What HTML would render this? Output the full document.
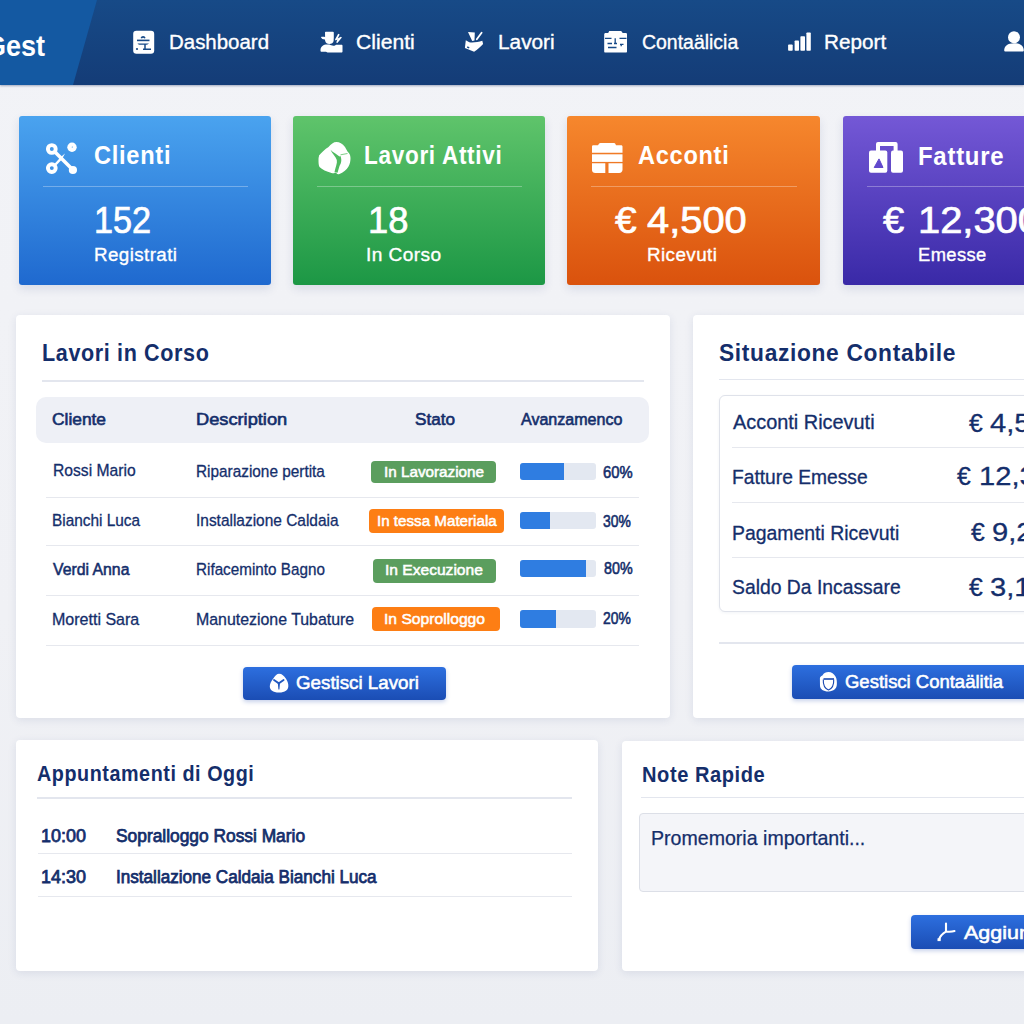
<!DOCTYPE html>
<html><head><meta charset="utf-8"><title>Gest Dashboard</title>
<style>
html,body{margin:0;padding:0;}
body{width:1024px;height:1024px;position:relative;overflow:hidden;background:linear-gradient(180deg,#f2f3f7 0%,#f0f1f5 60%,#eceef3 100%);font-family:"Liberation Sans",sans-serif;}
.b{position:absolute;}
.t{position:absolute;line-height:1;white-space:nowrap;transform-origin:0 0;}
</style></head><body>
<div class="b" style="left:0px;top:0px;width:1024px;height:85px;background:linear-gradient(180deg,#174a87 0%,#143c77 100%);box-shadow:0 1px 2px rgba(10,30,80,.35);"></div>
<svg class="b" style="left:0px;top:0px" width="120" height="85" viewBox="0 0 120 85"><polygon points="0,0 97,0 73,85 0,85" fill="#1459a2"/></svg>
<div class="t" id="gest" style="left:-15.00px;top:30.60px;font-size:30px;color:#fff;font-weight:700;transform:scaleX(0.9000);">Gest</div>
<div class="t" id="nav1" style="left:169.30px;top:31.62px;font-size:20px;color:#fff;font-weight:400;transform:scaleX(1.0224);-webkit-text-stroke:0.35px #fff;">Dashboard</div>
<div class="t" id="nav2" style="left:356.28px;top:31.62px;font-size:20px;color:#fff;font-weight:400;transform:scaleX(1.0571);-webkit-text-stroke:0.35px #fff;">Clienti</div>
<div class="t" id="nav3" style="left:497.66px;top:31.62px;font-size:20px;color:#fff;font-weight:400;transform:scaleX(1.0399);-webkit-text-stroke:0.35px #fff;">Lavori</div>
<div class="t" id="nav4" style="left:641.75px;top:31.62px;font-size:20px;color:#fff;font-weight:400;transform:scaleX(0.9724);-webkit-text-stroke:0.35px #fff;">Contaälicia</div>
<div class="t" id="nav5" style="left:824.41px;top:31.82px;font-size:20px;color:#fff;font-weight:400;transform:scaleX(1.0354);-webkit-text-stroke:0.35px #fff;">Report</div>
<svg class="b" style="left:128px;top:26px" width="32" height="32" viewBox="0 0 32 32"><rect x="5.2" y="4.7" width="21" height="23" rx="3.2" fill="#fff"/><path d="M13.3 12.2a1.9 1.9 0 0 1 3.6 0" stroke="#174a88" stroke-width="1.6" fill="none"/><path d="M9 14.4h12.5" stroke="#174a88" stroke-width="1.6"/><path d="M9.5 17.6h11.5c-1 1-2 1.2-3.5 1.2h-5c-1.5 0-2.5-0.2-3-1.2z" fill="#174a88"/><path d="M17 18v5M15 23.2h8" stroke="#174a88" stroke-width="1.5"/><circle cx="9" cy="23" r="1.1" fill="#174a88"/></svg>
<svg class="b" style="left:316px;top:26px" width="32" height="32" viewBox="0 0 32 32"><path d="M9 6.5c0-0.6 0.4-0.8 1-0.8h6.8c0.6 0 1 0.3 1 0.8v5l-0.2 3.5c-0.3 1.8-2 3-4.2 3s-3.8-1.3-4.2-3l-0.3-1.5c-2 0-3.5-0.8-4-2.5 1.5-0.5 3-0.3 4.2 0z" fill="#fff"/><path d="M4.5 24c0-3.5 3-5.5 6.5-5.5h2.5c1.5 1 3.5 1.5 5.5 1l1-0.8h5.5c0.6 0 1 0.4 1 1v5.8c0 0.6-0.4 1-1 1h-14l-1.5-0.8h-4.5c-0.6 0-1-0.5-1-1z" fill="#fff"/><path d="M22.2 7.8l1.5 0.6-2 4 3.2-1.6 1 0.8-4.5 5.5-1.2-0.5 1.2-3-1.8 0.8-0.6-1z" fill="#fff"/></svg>
<svg class="b" style="left:458px;top:26px" width="32" height="32" viewBox="0 0 32 32"><path d="M10 6l6.8 0.6-0.3 7.9-2.3 0.4z" fill="#fff"/><path d="M18.8 13.2l4.8-6.5" stroke="#fff" stroke-width="1.8" stroke-linecap="round"/><path d="M7.8 14.2l3.5 2c4 0.6 9 -0.3 13 -1.5l0.8 3.2c-2.5 2.8-5.5 5.5-9 7.8l-9.2-3.8z" fill="#fff"/><path d="M9.2 21l2 0.9" stroke="#174a88" stroke-width="1.4"/></svg>
<svg class="b" style="left:598px;top:24px" width="36" height="36" viewBox="0 0 36 36"><path d="M6.2 10.5c0-1 0.5-1.5 1.5-1.5h2.5l1-2h12l1.5 2h3c1 0 1.3 0.5 1.3 1.5v17c0 0.6-0.4 1-1 1h-20.8c-0.6 0-1-0.4-1-1z" fill="#fff"/><path d="M7 14.3h6.5M21.5 14.3h7M17.2 14.3v5.5M9.5 19.5h4.5M16 19.5h3M10 23.5h8.5M22 20.3h3.5M23.2 20.5v1.8" stroke="#174a88" stroke-width="1.3"/></svg>
<svg class="b" style="left:780px;top:24px" width="36" height="36" viewBox="0 0 36 36"><rect x="8.1" y="20.4" width="4.6" height="6.3" rx="0.8" fill="#fff"/><rect x="14.6" y="16.5" width="4.4" height="10.2" rx="0.8" fill="#fff"/><rect x="20.4" y="12.3" width="4.6" height="14.4" rx="0.8" fill="#fff"/><rect x="26.4" y="8.4" width="4.4" height="18.3" rx="0.8" fill="#fff"/></svg>
<svg class="b" style="left:994px;top:24px" width="30" height="36" viewBox="0 0 30 36"><circle cx="20" cy="13.2" r="6" fill="#fff"/><path d="M10.2 26.5c0-4.5 3.5-7.3 9.8-7.3s9.8 2.8 9.8 7.3c0 0.6-0.4 0.9-1 0.9h-17.6c-0.6 0-1-0.3-1-0.9z" fill="#fff"/></svg>
<div class="b" style="left:18.5px;top:115.5px;width:252.5px;height:169.0px;background:linear-gradient(180deg,#4aa3ef 0%,#1f69cf 100%);border-radius:3px;box-shadow:0 4px 10px rgba(40,60,120,.12);"></div>
<div class="b" style="left:42.5px;top:185.7px;width:205.0px;height:1.2px;background:rgba(255,255,255,.30);"></div>
<div class="t" id="ct0" style="left:94.36px;top:142.39px;font-size:26px;color:#fff;font-weight:700;transform:scaleX(0.9075);letter-spacing:0.8px;">Clienti</div>
<div class="t" id="cv0" style="left:93.51px;top:202.85px;font-size:36.5px;color:#fff;font-weight:400;transform:scaleX(0.9386);-webkit-text-stroke:0.7px #fff;">152</div>
<div class="t" id="cs0" style="left:93.74px;top:246.06px;font-size:18.3px;color:#fff;font-weight:400;transform:scaleX(1.0265);letter-spacing:0.4px;-webkit-text-stroke:0.35px #fff;">Registrati</div>
<div class="b" style="left:293px;top:115.5px;width:252px;height:169.0px;background:linear-gradient(180deg,#5fc46b 0%,#1c9745 100%);border-radius:3px;box-shadow:0 4px 10px rgba(40,60,120,.12);"></div>
<div class="b" style="left:317px;top:185.7px;width:204.5px;height:1.2px;background:rgba(255,255,255,.30);"></div>
<div class="t" id="ct1" style="left:364.19px;top:142.39px;font-size:26px;color:#fff;font-weight:700;transform:scaleX(0.8671);letter-spacing:0.8px;">Lavori Attivi</div>
<div class="t" id="cv1" style="left:367.71px;top:202.85px;font-size:36.5px;color:#fff;font-weight:400;transform:scaleX(0.9951);-webkit-text-stroke:0.7px #fff;">18</div>
<div class="t" id="cs1" style="left:365.91px;top:246.06px;font-size:18.3px;color:#fff;font-weight:400;transform:scaleX(1.0431);letter-spacing:0.4px;-webkit-text-stroke:0.35px #fff;">In Corso</div>
<div class="b" style="left:567px;top:115.5px;width:253px;height:169.0px;background:linear-gradient(180deg,#f6872d 0%,#da520d 100%);border-radius:3px;box-shadow:0 4px 10px rgba(40,60,120,.12);"></div>
<div class="b" style="left:591px;top:185.7px;width:205.5px;height:1.2px;background:rgba(255,255,255,.30);"></div>
<div class="t" id="ct2" style="left:638.03px;top:142.39px;font-size:26px;color:#fff;font-weight:700;transform:scaleX(0.9058);letter-spacing:0.8px;">Acconti</div>
<div class="t" id="cv2e" style="left:614.83px;top:202.85px;font-size:36.5px;color:#fff;font-weight:400;transform:scaleX(1.0647);-webkit-text-stroke:0.7px #fff;">€</div>
<div class="t" id="cv2n" style="left:647.33px;top:202.85px;font-size:36.5px;color:#fff;font-weight:400;transform:scaleX(1.0917);-webkit-text-stroke:0.7px #fff;">4,500</div>
<div class="t" id="cs2" style="left:646.94px;top:246.06px;font-size:18.3px;color:#fff;font-weight:400;transform:scaleX(1.0306);letter-spacing:0.4px;-webkit-text-stroke:0.35px #fff;">Ricevuti</div>
<div class="b" style="left:842.5px;top:115.5px;width:252.5px;height:169.0px;background:linear-gradient(180deg,#7458d6 0%,#3929a7 100%);border-radius:3px;box-shadow:0 4px 10px rgba(40,60,120,.12);"></div>
<div class="b" style="left:866.5px;top:185.7px;width:205.0px;height:1.2px;background:rgba(255,255,255,.30);"></div>
<div class="t" id="ct3" style="left:917.85px;top:142.99px;font-size:26px;color:#fff;font-weight:700;transform:scaleX(0.9214);letter-spacing:0.8px;">Fatture</div>
<div class="t" id="cv3e" style="left:882.76px;top:202.85px;font-size:36.5px;color:#fff;font-weight:400;transform:scaleX(1.0444);-webkit-text-stroke:0.7px #fff;">€</div>
<div class="t" id="cv3n" style="left:917.81px;top:202.85px;font-size:36.5px;color:#fff;font-weight:400;transform:scaleX(1.0917);-webkit-text-stroke:0.7px #fff;">12,300</div>
<div class="t" id="cs3" style="left:918.26px;top:246.06px;font-size:18.3px;color:#fff;font-weight:400;transform:scaleX(1.0038);letter-spacing:0.4px;-webkit-text-stroke:0.35px #fff;">Emesse</div>
<svg class="b" style="left:40px;top:138px" width="44" height="40" viewBox="0 0 44 40"><g fill="none" stroke="#fff" stroke-width="3.9"><circle cx="11.8" cy="11" r="3.9"/><circle cx="11.8" cy="30.1" r="3.9"/></g><circle cx="32" cy="9.2" r="4.7" fill="#fff"/><circle cx="32.3" cy="9" r="0.6" fill="#3f93e6"/><circle cx="32.9" cy="32" r="4.1" fill="#fff"/><path d="M15.5 14.5l16 16" stroke="#fff" stroke-width="3.6" stroke-linecap="round"/><path d="M15 27l5.5-5.8" stroke="#fff" stroke-width="2.4"/><path d="M19 20.5l6-5-3.5 6.5z" fill="#fff"/></svg>
<svg class="b" style="left:310px;top:135px" width="50" height="45" viewBox="0 0 50 45"><path d="M9 20.5c2.5-3 6-6.5 9.5-8.5 2.5-3 5-5 8-5s6 1.5 8.5 5l2.5 4.5c1.5 1.5 3 3 3 6.5 0 3-0.5 6-2 8.5-2 3.5-5.5 6-9 7.5-2 0.5-3 0-3-1l-1.5-0.5c-1 1-2 1-3.5 0.5-5-1.5-9.5-3.5-12-6-1-1.5-1-4.5-1-7.5 0-1.5 0.3-2.5 0.5-3.5z" fill="#fff"/><path d="M20.5 14.8C23 17.5 27 19.5 29.5 21.5L30.5 21C31.5 24 32 27 29.5 31L27.5 37.8L24.5 37C25.5 32 27.5 28 26.8 25C25.8 21.5 22 18.5 20.5 14.8Z" fill="#50bb60"/><path d="M30.5 19.8l7-1.3" stroke="#7fcf88" stroke-width="1"/></svg>
<svg class="b" style="left:585px;top:135px" width="50" height="45" viewBox="0 0 50 45"><path d="M7 11.5c0-1 0.6-1.3 1.5-1.3h4.5l1-1.5c0.3-0.5 0.8-0.7 1.5-0.7h13.5c0.7 0 1 0.2 1.3 0.7l0.7 1.5h5c1 0 1.5 0.5 1.5 1.5v6h-30.5z" fill="#fff"/><rect x="7" y="19.3" width="30.5" height="7.6" fill="#fff"/><path d="M7 28.3h13.3v9.7h-10c-2 0-3.3-1-3.3-3z" fill="#fff"/><path d="M23.5 28.3h14v6.5c0 2-1.3 3.2-3.3 3.2h-10.7z" fill="#fff"/></svg>
<svg class="b" style="left:860px;top:135px" width="50" height="45" viewBox="0 0 50 45"><path d="M18 16.5v-7.4h17.6v7.4" stroke="#fff" stroke-width="4" fill="none" stroke-linejoin="round"/><rect x="9" y="15.6" width="18.3" height="22.2" rx="2" fill="#fff"/><rect x="31" y="15.6" width="12" height="22.2" rx="2" fill="#fff"/><path d="M19 23.9l4 8.6h-8.8z" fill="#6148cc" stroke="#6148cc" stroke-width="1" stroke-linejoin="round"/></svg>
<div class="b" style="left:16px;top:315px;width:654px;height:403px;background:#fff;border-radius:4px;box-shadow:0 2px 8px rgba(40,60,120,.10);"></div>
<div class="b" style="left:693px;top:315px;width:407px;height:403px;background:#fff;border-radius:4px;box-shadow:0 2px 8px rgba(40,60,120,.10);"></div>
<div class="b" style="left:16.3px;top:740.3px;width:581.7px;height:230.4px;background:#fff;border-radius:4px;box-shadow:0 2px 8px rgba(40,60,120,.10);"></div>
<div class="b" style="left:622.3px;top:740.5px;width:477.7px;height:230.5px;background:#fff;border-radius:4px;box-shadow:0 2px 8px rgba(40,60,120,.10);"></div>
<div class="t" id="p1t" style="left:42.36px;top:340.83px;font-size:24.3px;color:#142e6b;font-weight:700;transform:scaleX(0.8872);letter-spacing:0.7px;">Lavori in Corso</div>
<div class="b" style="left:41.5px;top:380px;width:602.0px;height:1.5px;background:#e3e6ee;"></div>
<div class="b" style="left:36px;top:397px;width:613px;height:46px;background:#eef0f6;border-radius:10px;"></div>
<div class="t" id="h1" style="left:51.84px;top:410.95px;font-size:16.3px;color:#142e6b;font-weight:400;transform:scaleX(1.0660);-webkit-text-stroke:0.6px #142e6b;">Cliente</div>
<div class="t" id="h2" style="left:196.22px;top:410.95px;font-size:16.3px;color:#142e6b;font-weight:400;transform:scaleX(1.1198);-webkit-text-stroke:0.6px #142e6b;">Description</div>
<div class="t" id="h3" style="left:414.64px;top:410.95px;font-size:16.3px;color:#142e6b;font-weight:400;transform:scaleX(1.0534);-webkit-text-stroke:0.6px #142e6b;">Stato</div>
<div class="t" id="h4" style="left:521.00px;top:410.96px;font-size:16.3px;color:#142e6b;font-weight:400;transform:scaleX(0.9858);-webkit-text-stroke:0.6px #142e6b;">Avanzamenco</div>
<div class="t" id="r0a" style="left:52.50px;top:462.41px;font-size:16.3px;color:#142e6b;font-weight:400;transform:scaleX(0.9619);-webkit-text-stroke:0.3px #142e6b;">Rossi Mario</div>
<div class="t" id="r0b" style="left:196.28px;top:462.50px;font-size:16.3px;color:#142e6b;font-weight:400;transform:scaleX(0.9432);-webkit-text-stroke:0.3px #142e6b;">Riparazione pertita</div>
<div class="b" style="left:370.9px;top:460.9px;width:125.0px;height:22.5px;background:#5b9e5e;border-radius:4px;"></div>
<div class="t" id="r0c" style="left:384.13px;top:463.58px;font-size:15.5px;color:#fff;font-weight:400;transform:scaleX(0.9836);-webkit-text-stroke:0.55px #fff;">In Lavorazione</div>
<div class="b" style="left:520px;top:463.1px;width:76px;height:16.9px;background:#e3e8f1;border-radius:3px;"></div>
<div class="b" style="left:520px;top:463.1px;width:44px;height:16.9px;background:#2f7de1;border-radius:3px 0 0 3px;"></div>
<div class="t" id="r0d" style="left:602.51px;top:465.08px;font-size:16.7px;color:#142e6b;font-weight:400;transform:scaleX(0.8860);-webkit-text-stroke:0.6px #142e6b;">60%</div>
<div class="t" id="r1a" style="left:52.49px;top:512.30px;font-size:16.3px;color:#142e6b;font-weight:400;transform:scaleX(0.9449);-webkit-text-stroke:0.3px #142e6b;">Bianchi Luca</div>
<div class="t" id="r1b" style="left:196.21px;top:512.30px;font-size:16.3px;color:#142e6b;font-weight:400;transform:scaleX(0.9490);-webkit-text-stroke:0.3px #142e6b;">Installazione Caldaia</div>
<div class="b" style="left:368.75px;top:509.3px;width:135.25px;height:24.1px;background:#fd7e14;border-radius:4px;"></div>
<div class="t" id="r1c" style="left:377.29px;top:513.38px;font-size:15.5px;color:#fff;font-weight:400;transform:scaleX(0.9786);-webkit-text-stroke:0.55px #fff;">In tessa Materiala</div>
<div class="b" style="left:520px;top:511.5px;width:76px;height:17.3px;background:#e3e8f1;border-radius:3px;"></div>
<div class="b" style="left:520px;top:511.5px;width:30px;height:17.3px;background:#2f7de1;border-radius:3px 0 0 3px;"></div>
<div class="t" id="r1d" style="left:603.32px;top:514.26px;font-size:16.7px;color:#142e6b;font-weight:400;transform:scaleX(0.8321);-webkit-text-stroke:0.6px #142e6b;">30%</div>
<div class="t" id="r2a" style="left:53.48px;top:560.95px;font-size:16.3px;color:#142e6b;font-weight:400;transform:scaleX(0.9706);-webkit-text-stroke:0.55px #142e6b;">Verdi Anna</div>
<div class="t" id="r2b" style="left:196.30px;top:561.10px;font-size:16.3px;color:#142e6b;font-weight:400;transform:scaleX(0.9368);-webkit-text-stroke:0.3px #142e6b;">Rifaceminto Bagno</div>
<div class="b" style="left:373px;top:558.8px;width:123.2px;height:23.8px;background:#5b9e5e;border-radius:4px;"></div>
<div class="t" id="r2c" style="left:385.48px;top:562.43px;font-size:15.5px;color:#fff;font-weight:400;transform:scaleX(1.0049);-webkit-text-stroke:0.55px #fff;">In Execuzione</div>
<div class="b" style="left:520px;top:560.2px;width:76px;height:17.0px;background:#e3e8f1;border-radius:3px;"></div>
<div class="b" style="left:520px;top:560.2px;width:65.6px;height:17.0px;background:#2f7de1;border-radius:3px 0 0 3px;"></div>
<div class="t" id="r2d" style="left:604.17px;top:561.05px;font-size:16.7px;color:#142e6b;font-weight:400;transform:scaleX(0.8568);-webkit-text-stroke:0.6px #142e6b;">80%</div>
<div class="t" id="r3a" style="left:52.43px;top:611.00px;font-size:16.3px;color:#142e6b;font-weight:400;transform:scaleX(0.9840);-webkit-text-stroke:0.3px #142e6b;">Moretti Sara</div>
<div class="t" id="r3b" style="left:196.25px;top:611.00px;font-size:16.3px;color:#142e6b;font-weight:400;transform:scaleX(0.9761);-webkit-text-stroke:0.3px #142e6b;">Manutezione Tubature</div>
<div class="b" style="left:371.5px;top:607.2px;width:128.0px;height:24.1px;background:#fd7e14;border-radius:4px;"></div>
<div class="t" id="r3c" style="left:383.54px;top:610.83px;font-size:15.5px;color:#fff;font-weight:400;transform:scaleX(1.0109);-webkit-text-stroke:0.55px #fff;">In Soprolloggo</div>
<div class="b" style="left:520px;top:610px;width:76px;height:17.7px;background:#e3e8f1;border-radius:3px;"></div>
<div class="b" style="left:520px;top:610px;width:36px;height:17.7px;background:#2f7de1;border-radius:3px 0 0 3px;"></div>
<div class="t" id="r3d" style="left:603.32px;top:610.86px;font-size:16.7px;color:#142e6b;font-weight:400;transform:scaleX(0.8321);-webkit-text-stroke:0.6px #142e6b;">20%</div>
<div class="b" style="left:45.8px;top:496.8px;width:593.2px;height:1.2px;background:#e6e8ee;"></div>
<div class="b" style="left:45.8px;top:544.8px;width:593.2px;height:1.2px;background:#e6e8ee;"></div>
<div class="b" style="left:45.8px;top:595.1px;width:593.2px;height:1.2px;background:#e6e8ee;"></div>
<div class="b" style="left:45.8px;top:645.1px;width:593.2px;height:1.2px;background:#e6e8ee;"></div>
<div class="b" style="left:243.2px;top:666.8px;width:202.8px;height:33.3px;background:linear-gradient(180deg,#2d6fdf,#1b4db4);border-radius:4px;box-shadow:0 2px 4px rgba(30,70,170,.25);"></div>
<svg class="b" style="left:264px;top:670px" width="30" height="28" viewBox="0 0 30 28"><path d="M15 3.8c3 0 5 2 7 5s2.5 5.5 2.3 8c-0.3 3-3 5.8-9.3 5.8s-9-2.8-9.2-5.8c-0.2-3 1.5-5.5 3.5-8.3s3.7-4.7 5.7-4.7z" fill="#fff"/><path d="M10 10l4.8 3.3 4.8-3.3" stroke="#2058c0" stroke-width="1.8" fill="none" stroke-linecap="round"/><path d="M13.8 13h2.2l-0.6 6.5h-1z" fill="#2058c0"/></svg>
<div class="t" id="b1" style="left:296.19px;top:675.19px;font-size:17.9px;color:#fff;font-weight:400;transform:scaleX(1.0477);-webkit-text-stroke:0.55px #fff;">Gestisci Lavori</div>
<div class="t" id="p2t" style="left:718.61px;top:340.85px;font-size:23.8px;color:#142e6b;font-weight:700;transform:scaleX(0.9559);letter-spacing:0.7px;">Situazione Contabile</div>
<div class="b" style="left:718.6px;top:378.8px;width:381.4px;height:1.4px;background:#e3e6ee;"></div>
<div class="b" style="left:718.6px;top:394.7px;width:381.4px;height:217.8px;border:1px solid #dfe2ea;border-radius:6px;box-sizing:border-box;background:#fff;box-shadow:0 1px 3px rgba(40,60,120,.06);"></div>
<div class="t" id="s0a" style="left:732.67px;top:412.87px;font-size:19.7px;color:#142e6b;font-weight:400;transform:scaleX(1.0108);-webkit-text-stroke:0.3px #142e6b;">Acconti Ricevuti</div>
<div class="t" id="s0e" style="left:969.08px;top:409.71px;font-size:26.5px;color:#142e6b;font-weight:400;transform:scaleX(0.9339);-webkit-text-stroke:0.3px #142e6b;">€</div>
<div class="t" id="s0n" style="left:990.30px;top:409.71px;font-size:26.5px;color:#142e6b;font-weight:400;transform:scaleX(1.1000);-webkit-text-stroke:0.3px #142e6b;">4,500</div>
<div class="t" id="s1a" style="left:731.79px;top:468.27px;font-size:19.7px;color:#142e6b;font-weight:400;transform:scaleX(0.9756);-webkit-text-stroke:0.3px #142e6b;">Fatture Emesse</div>
<div class="t" id="s1e" style="left:957.03px;top:463.31px;font-size:26.5px;color:#142e6b;font-weight:400;transform:scaleX(0.9339);-webkit-text-stroke:0.3px #142e6b;">€</div>
<div class="t" id="s1n" style="left:978.80px;top:463.31px;font-size:26.5px;color:#142e6b;font-weight:400;transform:scaleX(1.1000);-webkit-text-stroke:0.3px #142e6b;">12,300</div>
<div class="t" id="s2a" style="left:731.75px;top:523.67px;font-size:19.7px;color:#142e6b;font-weight:400;transform:scaleX(0.9861);-webkit-text-stroke:0.3px #142e6b;">Pagamenti Ricevuti</div>
<div class="t" id="s2e" style="left:971.08px;top:518.71px;font-size:26.5px;color:#142e6b;font-weight:400;transform:scaleX(0.9339);-webkit-text-stroke:0.3px #142e6b;">€</div>
<div class="t" id="s2n" style="left:991.92px;top:518.71px;font-size:26.5px;color:#142e6b;font-weight:400;transform:scaleX(1.1000);-webkit-text-stroke:0.3px #142e6b;">9,200</div>
<div class="t" id="s3a" style="left:731.68px;top:578.27px;font-size:19.7px;color:#142e6b;font-weight:400;transform:scaleX(0.9818);-webkit-text-stroke:0.3px #142e6b;">Saldo Da Incassare</div>
<div class="t" id="s3e" style="left:969.08px;top:573.51px;font-size:26.5px;color:#142e6b;font-weight:400;transform:scaleX(0.9339);-webkit-text-stroke:0.3px #142e6b;">€</div>
<div class="t" id="s3n" style="left:989.90px;top:573.51px;font-size:26.5px;color:#142e6b;font-weight:400;transform:scaleX(1.1000);-webkit-text-stroke:0.3px #142e6b;">3,100</div>
<div class="b" style="left:732px;top:446.9px;width:368px;height:1.2px;background:#e6e8ee;"></div>
<div class="b" style="left:732px;top:501.9px;width:368px;height:1.2px;background:#e6e8ee;"></div>
<div class="b" style="left:732px;top:557.2px;width:368px;height:1.2px;background:#e6e8ee;"></div>
<div class="b" style="left:718.6px;top:642.3px;width:381.4px;height:1.3px;background:#e3e6ee;"></div>
<div class="b" style="left:791.5px;top:665.3px;width:308.5px;height:33.7px;background:linear-gradient(180deg,#2d6fdf,#1b4db4);border-radius:4px;box-shadow:0 2px 4px rgba(30,70,170,.25);"></div>
<svg class="b" style="left:814px;top:668px" width="30" height="28" viewBox="0 0 30 28"><path d="M14.5 4.1c3 0 5.5 2 7 4.5s1.5 6 1.3 8.5c-0.3 3.5-3 6.3-8.3 6.3s-8.3-2.5-8.5-5.5l-0.1-7.5c0-1.5 1-2.5 2.5-3 1.5-2.3 3.5-3.3 6.1-3.3z" fill="#fff"/><path d="M9.5 11h10.5" stroke="#1a48b0" stroke-width="1.6"/><path d="M9.3 11.5c-0.3 5 1.5 9 5.2 10.5 3.7-1.5 5.5-5.5 5.2-10.5" stroke="#1a48b0" stroke-width="1.1" fill="none"/></svg>
<div class="t" id="b2" style="left:844.58px;top:673.99px;font-size:17.9px;color:#fff;font-weight:400;transform:scaleX(1.0328);-webkit-text-stroke:0.55px #fff;">Gestisci Contaälitia</div>
<div class="t" id="p3t" style="left:37.21px;top:762.85px;font-size:21.2px;color:#142e6b;font-weight:700;transform:scaleX(0.9320);letter-spacing:0.6px;">Appuntamenti di Oggi</div>
<div class="b" style="left:37px;top:797.2px;width:535.3px;height:1.4px;background:#e3e6ee;"></div>
<div class="t" id="a0t" style="left:41.22px;top:827.53px;font-size:17.5px;color:#142e6b;font-weight:400;transform:scaleX(1.0255);-webkit-text-stroke:0.75px #142e6b;">10:00</div>
<div class="t" id="a0d" style="left:116.05px;top:827.53px;font-size:17.5px;color:#142e6b;font-weight:400;transform:scaleX(0.9917);-webkit-text-stroke:0.75px #142e6b;">Sopralloggo Rossi Mario</div>
<div class="b" style="left:38px;top:852.8px;width:534.3px;height:1.2px;background:#e6e8ee;"></div>
<div class="t" id="a1t" style="left:41.22px;top:869.03px;font-size:17.5px;color:#142e6b;font-weight:400;transform:scaleX(1.0255);-webkit-text-stroke:0.75px #142e6b;">14:30</div>
<div class="t" id="a1d" style="left:116.17px;top:869.08px;font-size:17.5px;color:#142e6b;font-weight:400;transform:scaleX(0.9775);-webkit-text-stroke:0.75px #142e6b;">Installazione Caldaia Bianchi Luca</div>
<div class="b" style="left:38px;top:895.7px;width:534.3px;height:1.3px;background:#e6e8ee;"></div>
<div class="t" id="p4t" style="left:642.00px;top:764.45px;font-size:21.2px;color:#142e6b;font-weight:700;transform:scaleX(0.9468);letter-spacing:0.6px;">Note Rapide</div>
<div class="b" style="left:641.2px;top:797px;width:458.8px;height:1.4px;background:#e3e6ee;"></div>
<div class="b" style="left:639.4px;top:813px;width:460.6px;height:79px;background:#f4f5f9;border:1px solid #dcdfe7;border-radius:4px;box-sizing:border-box;"></div>
<div class="t" id="n1" style="left:651.28px;top:828.79px;font-size:19.8px;color:#142e6b;font-weight:400;transform:scaleX(0.9896);-webkit-text-stroke:0.25px #142e6b;">Promemoria importanti...</div>
<div class="b" style="left:911px;top:915px;width:189px;height:34.4px;background:linear-gradient(180deg,#2d6fdf,#1b4db4);border-radius:4px;box-shadow:0 2px 4px rgba(30,70,170,.25);"></div>
<svg class="b" style="left:930px;top:916px" width="32" height="32" viewBox="0 0 32 32"><path d="M16 7.5v8M16.2 15.6c3 0.3 6 0.2 8.3-0.6M16 15.6c-3.5 2-6 4.8-7 8" stroke="#fff" stroke-width="2.1" fill="none" stroke-linecap="round"/><rect x="7.5" y="22.3" width="3.2" height="2.8" fill="#fff"/></svg>
<div class="t" id="b3" style="left:964.44px;top:924.99px;font-size:17.9px;color:#fff;font-weight:400;transform:scaleX(1.2000);-webkit-text-stroke:0.55px #fff;">Aggiungi</div>
</body></html>
